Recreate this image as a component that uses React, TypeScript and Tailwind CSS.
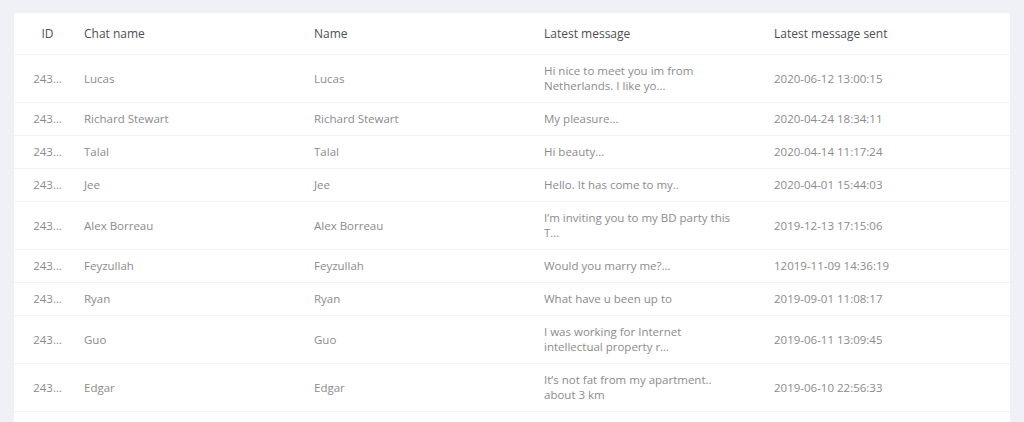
import React from 'react'

type Chat = {
  id: string
  chatName: string
  name: string
  message: string
  sent: string
}

const chats: Chat[] = [
  { id: '243…', chatName: 'Lucas', name: 'Lucas', message: 'Hi nice to meet you im from Netherlands. I like yo…', sent: '2020-06-12 13:00:15' },
  { id: '243…', chatName: 'Richard Stewart', name: 'Richard Stewart', message: 'My pleasure…', sent: '2020-04-24 18:34:11' },
  { id: '243…', chatName: 'Talal', name: 'Talal', message: 'Hi beauty…', sent: '2020-04-14 11:17:24' },
  { id: '243…', chatName: 'Jee', name: 'Jee', message: 'Hello. It has come to my..', sent: '2020-04-01 15:44:03' },
  { id: '243…', chatName: 'Alex Borreau', name: 'Alex Borreau', message: 'I’m inviting you to my BD party this T…', sent: '2019-12-13 17:15:06' },
  { id: '243…', chatName: 'Feyzullah', name: 'Feyzullah', message: 'Would you marry me?…', sent: '12019-11-09 14:36:19' },
  { id: '243…', chatName: 'Ryan', name: 'Ryan', message: 'What have u been up to', sent: '2019-09-01 11:08:17' },
  { id: '243…', chatName: 'Guo', name: 'Guo', message: 'I was working for Internet intellectual property r…', sent: '2019-06-11 13:09:45' },
  { id: '243…', chatName: 'Edgar', name: 'Edgar', message: 'It’s not fat from my apartment.. about 3 km', sent: '2019-06-10 22:56:33' },
  { id: '243…', chatName: 'Vicky', name: 'Vicky', message: 'Hi how are you, would you like to go…', sent: '2019-05-18 20:17:13' },
]

const cols = 'grid grid-cols-[70px_230px_230px_230px_1fr] items-center'

export default function App() {
  return (
    <div
      className="min-h-screen bg-[#f0f1f6] px-[14px] pt-[13px]"
      style={{ fontFamily: '"Open Sans", "Liberation Sans", sans-serif' }}
    >
      <div className="rounded-[3px] bg-white">
        {/* header */}
        <div className={`${cols} h-[42px] border-b border-[#f2f3f8] text-[12px] text-[#4d4f55]`}>
          <div className="pr-[3px] text-center">ID</div>
          <div>Chat name</div>
          <div>Name</div>
          <div>Latest message</div>
          <div>Latest message sent</div>
        </div>

        {/* rows */}
        {chats.map((c, i) => (
          <div
            key={i}
            className={`${cols} border-b border-[#f2f3f8] pt-[8px] pb-[9px] text-[11.5px] leading-[15px] text-[#8b8b8e]`}
          >
            <div className="pr-[3px] text-center">{c.id}</div>
            <div>{c.chatName}</div>
            <div>{c.name}</div>
            <div className="max-w-[188px]">{c.message}</div>
            <div>{c.sent}</div>
          </div>
        ))}
      </div>
    </div>
  )
}
